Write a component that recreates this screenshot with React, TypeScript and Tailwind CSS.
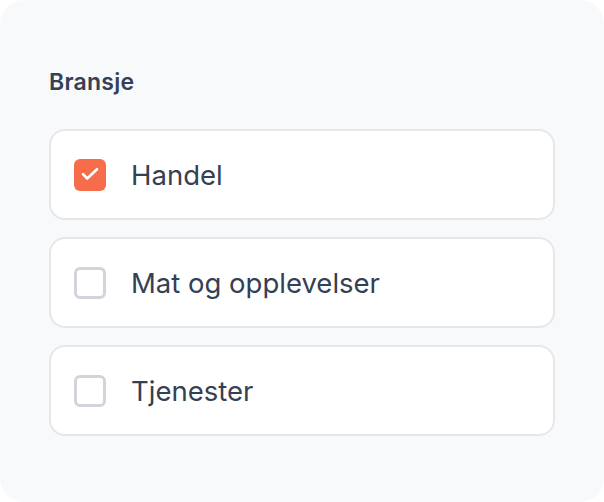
import { useState } from "react";

const OPTIONS = ["Handel", "Mat og opplevelser", "Tjenester"];

function CheckIcon() {
  return (
    <svg viewBox="0 0 32 32" className="h-8 w-8" fill="none">
      <path
        d="M9 15.2l4.2 4.3 9.8-9.3"
        stroke="white"
        strokeWidth="2.6"
        strokeLinecap="round"
        strokeLinejoin="round"
      />
    </svg>
  );
}

export default function App() {
  const [selected, setSelected] = useState<string[]>(["Handel"]);

  const toggle = (name: string) =>
    setSelected((s) => (s.includes(name) ? s.filter((x) => x !== name) : [...s, name]));

  return (
    <div className="bg-white" style={{ fontFamily: "Inter, 'Noto Sans', sans-serif" }}>
      <div className="h-[502px] w-[604px] rounded-3xl bg-[#f8f9fb] px-[49px] pt-[66px]">
        <h3 className="text-[23px] font-semibold leading-8 tracking-[0.01em] text-[#344054]">Bransje</h3>
        <div className="mt-[31px] flex flex-col gap-[17px]">
          {OPTIONS.map((name) => {
            const checked = selected.includes(name);
            return (
              <button
                key={name}
                onClick={() => toggle(name)}
                className="flex h-[91px] items-center gap-[25px] rounded-2xl border-2 border-[#e5e7eb] bg-white pl-[23px] text-left"
              >
                {checked ? (
                  <span className="flex h-8 w-8 items-center justify-center rounded-md bg-[#f76c4a]">
                    <CheckIcon />
                  </span>
                ) : (
                  <span className="h-8 w-8 rounded-md border-[3px] border-[#d1d5db] bg-white" />
                )}
                <span className="text-[27.5px] leading-8 text-[#344054]">{name}</span>
              </button>
            );
          })}
        </div>
      </div>
    </div>
  );
}
